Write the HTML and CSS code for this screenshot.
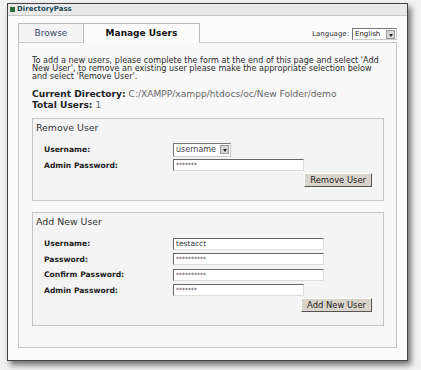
FILE: index.html
```html
<!DOCTYPE html>
<html lang="en">

<head>
    <meta charset="UTF-8">
    <title>DirectoryPass</title>
    <link rel="stylesheet" href="styles.css">
</head>

<body>

    <div class="window">
        <div class="titlebar"><span class="logo"></span>DirectoryPass</div>

        <div class="tabbar">
            <div class="tab">Browse</div>
            <div class="tab active">Manage Users</div>
            <div class="language">
                Language:
                <span class="select lang-select">English<span class="arrow"></span></span>
            </div>
        </div>

        <div class="panel">
            <p class="intro">To add a new users, please complete the form at the end of this page and select 'Add
                New User', to remove an existing user please make the appropriate selection below
                and select 'Remove User'.</p>

            <div class="info">
                <div><b>Current Directory:</b> <span class="value">C:/XAMPP/xampp/htdocs/oc/New Folder/demo</span></div>
                <div><b>Total Users:</b> <span class="value">1</span></div>
            </div>

            <div class="box">
                <h3>Remove User</h3>
                <div class="row">
                    <label>Username:</label>
                    <span class="select user-select">username<span class="arrow"></span></span>
                </div>
                <div class="row">
                    <label>Admin Password:</label>
                    <span class="input short">*******</span>
                </div>
                <div class="actions">
                    <button class="btn">Remove User</button>
                </div>
            </div>

            <div class="box add-box">
                <h3>Add New User</h3>
                <div class="row">
                    <label>Username:</label>
                    <span class="input text">testacct</span>
                </div>
                <div class="row">
                    <label>Password:</label>
                    <span class="input">**********</span>
                </div>
                <div class="row">
                    <label>Confirm Password:</label>
                    <span class="input">**********</span>
                </div>
                <div class="row">
                    <label>Admin Password:</label>
                    <span class="input short">*******</span>
                </div>
                <div class="actions">
                    <button class="btn">Add New User</button>
                </div>
            </div>
        </div>
    </div>

</body>

</html>
```

FILE: styles.css
```css
* {
    margin: 0;
    padding: 0;
    box-sizing: border-box;
}

body {
    font-family: 'DejaVu Sans', Verdana, sans-serif;
    background-color: #f3f3f3;
    color: #222;
    width: 421px;
    height: 370px;
    overflow: hidden;
}

.window {
    margin: 3px 0 0 7px;
    width: 401px;
    height: 358px;
    background-color: #fcfcfc;
    border: 1px solid #444;
    box-shadow: 3px 4px 6px rgba(0, 0, 0, 0.55);
}

.titlebar {
    height: 12px;
    background-color: #e9e9e9;
    border-bottom: 1px solid #c8c8c8;
    font-size: 7px;
    font-weight: bold;
    color: #1d4a55;
    line-height: 11px;
    padding-left: 2px;
    display: flex;
    align-items: center;
}

.logo {
    width: 5px;
    height: 5px;
    background-color: #2e6b3a;
    margin-right: 2px;
}

.tabbar {
    display: flex;
    align-items: flex-end;
    margin: 7px 10px 0 10px;
    height: 19px;
}

.tab {
    height: 19px;
    border: 1px solid #bbb;
    border-bottom: none;
    background-color: #f4f4f4;
    font-size: 9px;
    color: #3a4a6a;
    text-align: center;
    line-height: 18px;
    width: 66px;
}

.tab.active {
    width: 117px;
    margin-left: -1px;
    background-color: #fcfcfc;
    color: #111;
    font-weight: bold;
    height: 20px;
    margin-bottom: -1px;
    position: relative;
}

.language {
    margin-left: auto;
    font-size: 7px;
    color: #333;
    display: flex;
    align-items: center;
    gap: 3px;
    padding-bottom: 2px;
}

.select {
    display: inline-flex;
    align-items: center;
    justify-content: space-between;
    background-color: #fff;
    border: 1px solid #888;
    border-color: #777 #ccc #ccc #777;
    font-size: 7px;
    color: #222;
    height: 12px;
    padding: 0 1px 0 2px;
}

.lang-select {
    width: 45px;
}

.user-select {
    width: 58px;
    font-size: 8px;
    color: #444;
    height: 14px;
}

.arrow {
    width: 9px;
    height: 9px;
    background-color: #d8d8d8;
    border: 1px solid #999;
    position: relative;
}

.arrow::after {
    content: "";
    position: absolute;
    left: 2px;
    top: 3px;
    border-left: 2px solid transparent;
    border-right: 2px solid transparent;
    border-top: 3px solid #222;
}

.panel {
    margin: 0 10px;
    height: 306px;
    border: 1px solid #c8c8c8;
    background-color: #f8f8f8;
    padding: 13px 11px 0 13px;
}

.intro {
    font-size: 8.1px;
    line-height: 8px;
    color: #2a2a2a;
}

.info {
    margin-top: 9px;
    font-size: 9.1px;
    line-height: 10.5px;
    color: #222;
}

.info .value {
    color: #666;
}

.box {
    margin-top: 8px;
    margin-right: 1px;
    border: 1px solid #c4c4c4;
    background-color: #f4f4f4;
    padding: 3px 11px 13px 3px;
}

.add-box {
    margin-top: 11px;
}

.box h3 {
    font-size: 9.4px;
    font-weight: normal;
    color: #333;
    margin-bottom: 9px;
}

.row {
    display: flex;
    align-items: center;
    height: 15.5px;
    padding-left: 8px;
}

.row label {
    width: 129px;
    font-size: 7.6px;
    font-weight: bold;
    color: #222;
}

.input {
    display: block;
    width: 151px;
    height: 12px;
    background-color: #fff;
    border: 1px solid;
    border-color: #666 #ddd #ddd #666;
    font-size: 6px;
    line-height: 10px;
    padding-left: 2px;
    color: #333;
}

.input.text {
    font-size: 7.5px;
}

.input.short {
    width: 131px;
}

.actions {
    display: flex;
    justify-content: flex-end;
    margin-top: 0;
}

.btn {
    font-family: 'DejaVu Sans', Verdana, sans-serif;
    font-size: 8.4px;
    color: #222;
    background-color: #d8d4cc;
    border: 1px solid;
    border-color: #fff #555 #555 #fff;
    height: 14px;
    padding: 0 5px;
}
```
